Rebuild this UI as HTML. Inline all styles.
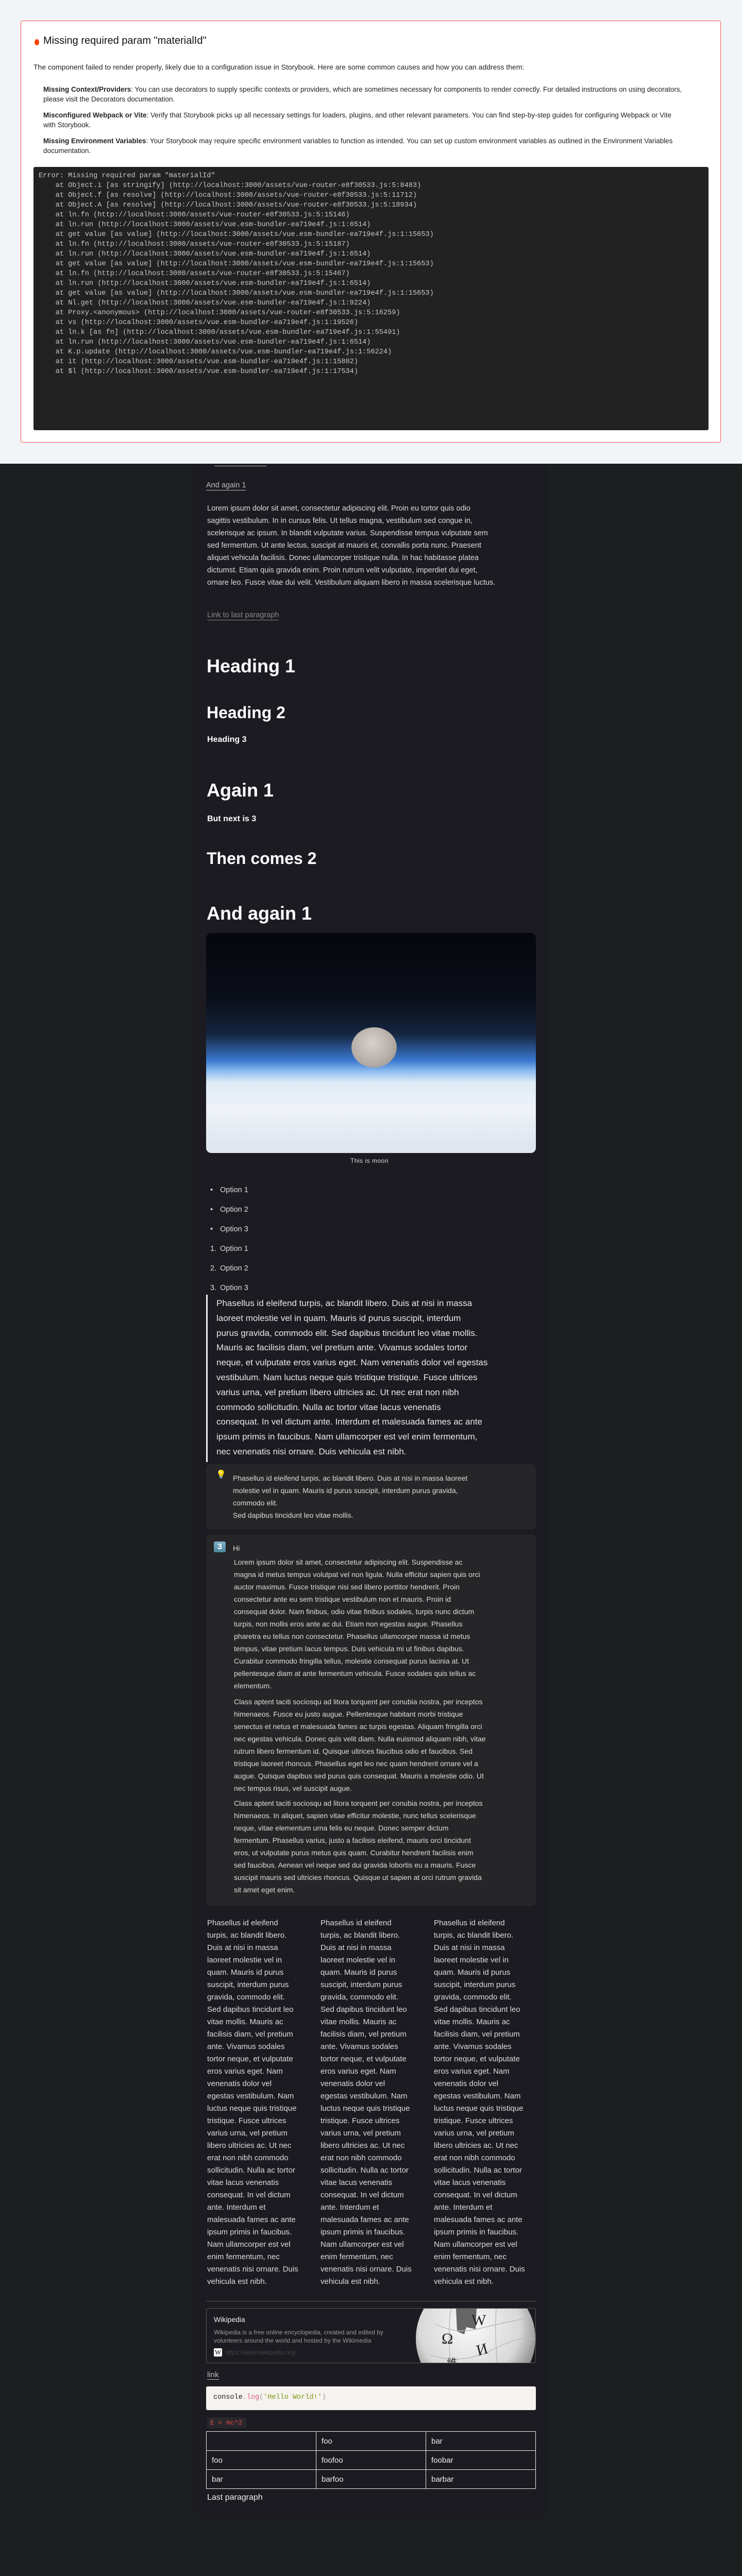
<!DOCTYPE html>
<html><head><meta charset="utf-8"><style>
*{margin:0;padding:0;box-sizing:border-box}
html,body{width:1440px;height:5016px;overflow:hidden}
body{background:#1b1f20;position:relative;font-family:"Liberation Sans",sans-serif}
.a{position:absolute;white-space:nowrap}
#top{position:absolute;left:0;top:0;width:1440px;height:900px;background:#f2f5f8}
#err{position:absolute;left:40px;top:40px;width:1359px;height:819px;background:#fff;border:1px solid #ff4d4d;border-radius:4px}
#err .t{font-size:20px;color:#111;}
#err p{font-size:13.5px;color:#222;line-height:19px}
pre.stack{position:absolute;left:65px;top:324px;width:1310px;height:511px;background:#222;border-radius:3px;color:#c8c8c8;font-family:"Liberation Mono",monospace;font-size:13.6px;line-height:19px;padding:8px 10px;overflow:hidden}
#card{position:absolute;left:376px;top:900px;width:688px;height:3988px;background:#1c1b21;border-radius:0 0 20px 20px}
.tx{color:#dcdcdc;font-size:14.5px;line-height:24px}
h1,h2,h3{color:#fff;font-weight:bold;position:absolute;white-space:nowrap}
h1{font-size:36px;line-height:40px}
h2{font-size:32px;line-height:40px}
h3{font-size:16px;line-height:20px}
.co{position:absolute;left:400px;width:640px;background:#262628;border-radius:8px}
.col{color:#dcdcdc;font-size:15px;line-height:24px;position:absolute;white-space:nowrap}
table{position:absolute;left:400px;top:4719px;width:640px;border-collapse:collapse}
td{border:1.5px solid #eee;height:37px;color:#eee;font-size:15px;padding:0 10px;width:33.3%}
</style></head><body>
<div id="top"></div>
<div id="err">
 <div class="a" style="left:26px;top:35px;width:9px;height:12px;border-radius:50%;background:#ff4400"></div>
 <div class="a t" style="left:43px;top:27px">Missing required param "materialId"</div>
 <p class="a" style="left:24px;top:80px;font-size:14px">The component failed to render properly, likely due to a configuration issue in Storybook. Here are some common causes and how you can address them:</p>
 <p class="a" style="left:43px;top:123px"><b>Missing Context/Providers</b>: You can use decorators to supply specific contexts or providers, which are sometimes necessary for components to render correctly. For detailed instructions on using decorators,<br>please visit the Decorators documentation.</p>
 <p class="a" style="left:43px;top:173px"><b>Misconfigured Webpack or Vite</b>: Verify that Storybook picks up all necessary settings for loaders, plugins, and other relevant parameters. You can find step-by-step guides for configuring Webpack or Vite<br>with Storybook.</p>
 <p class="a" style="left:43px;top:223px"><b>Missing Environment Variables</b>: Your Storybook may require specific environment variables to function as intended. You can set up custom environment variables as outlined in the Environment Variables<br>documentation.</p>
</div>
<pre class="stack">Error: Missing required param "materialId"
    at Object.i [as stringify] (http://localhost:3000/assets/vue-router-e8f30533.js:5:8483)
    at Object.f [as resolve] (http://localhost:3000/assets/vue-router-e8f30533.js:5:11712)
    at Object.A [as resolve] (http://localhost:3000/assets/vue-router-e8f30533.js:5:18934)
    at ln.fn (http://localhost:3000/assets/vue-router-e8f30533.js:5:15146)
    at ln.run (http://localhost:3000/assets/vue.esm-bundler-ea719e4f.js:1:6514)
    at get value [as value] (http://localhost:3000/assets/vue.esm-bundler-ea719e4f.js:1:15653)
    at ln.fn (http://localhost:3000/assets/vue-router-e8f30533.js:5:15187)
    at ln.run (http://localhost:3000/assets/vue.esm-bundler-ea719e4f.js:1:6514)
    at get value [as value] (http://localhost:3000/assets/vue.esm-bundler-ea719e4f.js:1:15653)
    at ln.fn (http://localhost:3000/assets/vue-router-e8f30533.js:5:15467)
    at ln.run (http://localhost:3000/assets/vue.esm-bundler-ea719e4f.js:1:6514)
    at get value [as value] (http://localhost:3000/assets/vue.esm-bundler-ea719e4f.js:1:15653)
    at Nl.get (http://localhost:3000/assets/vue.esm-bundler-ea719e4f.js:1:9224)
    at Proxy.&lt;anonymous&gt; (http://localhost:3000/assets/vue-router-e8f30533.js:5:16259)
    at vs (http://localhost:3000/assets/vue.esm-bundler-ea719e4f.js:1:19526)
    at ln.k [as fn] (http://localhost:3000/assets/vue.esm-bundler-ea719e4f.js:1:55491)
    at ln.run (http://localhost:3000/assets/vue.esm-bundler-ea719e4f.js:1:6514)
    at K.p.update (http://localhost:3000/assets/vue.esm-bundler-ea719e4f.js:1:56224)
    at it (http://localhost:3000/assets/vue.esm-bundler-ea719e4f.js:1:15882)
    at $l (http://localhost:3000/assets/vue.esm-bundler-ea719e4f.js:1:17534)</pre>

<div id="card"></div>
<div class="a" style="left:416px;top:904px;width:101px;height:1px;background:#bbb"></div>
<div class="a" style="left:400px;top:933px;font-size:14.5px;line-height:18px;color:#bbb;border-bottom:1px solid #bbb">And again 1</div>
<div class="a tx" style="left:402px;top:975px">Lorem ipsum dolor sit amet, consectetur adipiscing elit. Proin eu tortor quis odio<br>sagittis vestibulum. In in cursus felis. Ut tellus magna, vestibulum sed congue in,<br>scelerisque ac ipsum. In blandit vulputate varius. Suspendisse tempus vulputate sem<br>sed fermentum. Ut ante lectus, suscipit at mauris et, convallis porta nunc. Praesent<br>aliquet vehicula facilisis. Donec ullamcorper tristique nulla. In hac habitasse platea<br>dictumst. Etiam quis gravida enim. Proin rutrum velit vulputate, imperdiet dui eget,<br>ornare leo. Fusce vitae dui velit. Vestibulum aliquam libero in massa scelerisque luctus.</div>
<div class="a" style="left:402px;top:1185px;font-size:14.5px;line-height:18px;color:#888;border-bottom:1px solid #888">Link to last paragraph</div>
<h1 style="left:401px;top:1273px">Heading 1</h1>
<h2 style="left:401px;top:1363px">Heading 2</h2>
<h3 style="left:402px;top:1426px">Heading 3</h3>
<h1 style="left:401px;top:1514px">Again 1</h1>
<h3 style="left:402px;top:1580px">But next is 3</h3>
<h2 style="left:401px;top:1646px">Then comes 2</h2>
<h1 style="left:401px;top:1753px">And again 1</h1>
<div class="a" style="left:400px;top:1811px;width:640px;height:427px;border-radius:10px;overflow:hidden;background:linear-gradient(180deg,#06070c 0%,#0a0e18 30%,#152540 46%,#3a78d0 58%,#8fbff0 63%,#e0ebf7 68%,#eef2f8 80%,#dde4ee 100%)">
 <div style="position:absolute;left:282px;top:183px;width:88px;height:78px;border-radius:50%;background:radial-gradient(circle at 45% 40%,#d8d2cc,#b5aca6 60%,#8f8884)"></div>
</div>
<div class="a" style="left:680px;top:2245px;font-size:12px;line-height:16px;color:#ddd;letter-spacing:.5px">This is moon</div>
<div class="a tx" style="left:408px;top:2291px;line-height:38px">•<br>•<br>•</div>
<div class="a tx" style="left:408px;top:2405px;line-height:38px">1.<br>2.<br>3.</div>
<div class="a tx" style="left:427px;top:2291px;line-height:38px">Option 1<br>Option 2<br>Option 3<br>Option 1<br>Option 2<br>Option 3</div>
<div class="a" style="left:400px;top:2513px;width:3px;height:325px;background:#eee"></div>
<div class="a" style="left:420px;top:2516px;color:#e8e8e8;font-size:17px;line-height:28.8px">Phasellus id eleifend turpis, ac blandit libero. Duis at nisi in massa<br>laoreet molestie vel in quam. Mauris id purus suscipit, interdum<br>purus gravida, commodo elit. Sed dapibus tincidunt leo vitae mollis.<br>Mauris ac facilisis diam, vel pretium ante. Vivamus sodales tortor<br>neque, et vulputate eros varius eget. Nam venenatis dolor vel egestas<br>vestibulum. Nam luctus neque quis tristique tristique. Fusce ultrices<br>varius urna, vel pretium libero ultricies ac. Ut nec erat non nibh<br>commodo sollicitudin. Nulla ac tortor vitae lacus venenatis<br>consequat. In vel dictum ante. Interdum et malesuada fames ac ante<br>ipsum primis in faucibus. Nam ullamcorper est vel enim fermentum,<br>nec venenatis nisi ornare. Duis vehicula est nibh.</div>

<div class="co" style="top:2842px;height:127px"></div>
<div class="a" style="left:419px;top:2852px;font-size:16px">💡</div>
<div class="a tx" style="left:452px;top:2857px;font-size:14px">Phasellus id eleifend turpis, ac blandit libero. Duis at nisi in massa laoreet<br>molestie vel in quam. Mauris id purus suscipit, interdum purus gravida,<br>commodo elit.<br>Sed dapibus tincidunt leo vitae mollis.</div>

<div class="co" style="top:2979px;height:720px"></div>
<div class="a" style="left:415px;top:2992px;width:23px;height:21px;background:linear-gradient(#7fb0c8,#4f86a0);border-radius:3px;color:#fff;font-weight:bold;font-size:16px;line-height:21px;text-align:center">3</div>
<div class="a tx" style="left:452px;top:2993px;font-size:14px">Hi</div>
<div class="a tx" style="left:454px;top:3020px;font-size:14px">Lorem ipsum dolor sit amet, consectetur adipiscing elit. Suspendisse ac<br>magna id metus tempus volutpat vel non ligula. Nulla efficitur sapien quis orci<br>auctor maximus. Fusce tristique nisi sed libero porttitor hendrerit. Proin<br>consectetur ante eu sem tristique vestibulum non et mauris. Proin id<br>consequat dolor. Nam finibus, odio vitae finibus sodales, turpis nunc dictum<br>turpis, non mollis eros ante ac dui. Etiam non egestas augue. Phasellus<br>pharetra eu tellus non consectetur. Phasellus ullamcorper massa id metus<br>tempus, vitae pretium lacus tempus. Duis vehicula mi ut finibus dapibus.<br>Curabitur commodo fringilla tellus, molestie consequat purus lacinia at. Ut<br>pellentesque diam at ante fermentum vehicula. Fusce sodales quis tellus ac<br>elementum.</div>
<div class="a tx" style="left:454px;top:3291px;font-size:14px">Class aptent taciti sociosqu ad litora torquent per conubia nostra, per inceptos<br>himenaeos. Fusce eu justo augue. Pellentesque habitant morbi tristique<br>senectus et netus et malesuada fames ac turpis egestas. Aliquam fringilla orci<br>nec egestas vehicula. Donec quis velit diam. Nulla euismod aliquam nibh, vitae<br>rutrum libero fermentum id. Quisque ultrices faucibus odio et faucibus. Sed<br>tristique laoreet rhoncus. Phasellus eget leo nec quam hendrerit ornare vel a<br>augue. Quisque dapibus sed purus quis consequat. Mauris a molestie odio. Ut<br>nec tempus risus, vel suscipit augue.</div>
<div class="a tx" style="left:454px;top:3488px;font-size:14px">Class aptent taciti sociosqu ad litora torquent per conubia nostra, per inceptos<br>himenaeos. In aliquet, sapien vitae efficitur molestie, nunc tellus scelerisque<br>neque, vitae elementum urna felis eu neque. Donec semper dictum<br>fermentum. Phasellus varius, justo a facilisis eleifend, mauris orci tincidunt<br>eros, ut vulputate purus metus quis quam. Curabitur hendrerit facilisis enim<br>sed faucibus. Aenean vel neque sed dui gravida lobortis eu a mauris. Fusce<br>suscipit mauris sed ultricies rhoncus. Quisque ut sapien at orci rutrum gravida<br>sit amet eget enim.</div>

<div class="col" style="left:402px;top:3721px">Phasellus id eleifend<br>turpis, ac blandit libero.<br>Duis at nisi in massa<br>laoreet molestie vel in<br>quam. Mauris id purus<br>suscipit, interdum purus<br>gravida, commodo elit.<br>Sed dapibus tincidunt leo<br>vitae mollis. Mauris ac<br>facilisis diam, vel pretium<br>ante. Vivamus sodales<br>tortor neque, et vulputate<br>eros varius eget. Nam<br>venenatis dolor vel<br>egestas vestibulum. Nam<br>luctus neque quis tristique<br>tristique. Fusce ultrices<br>varius urna, vel pretium<br>libero ultricies ac. Ut nec<br>erat non nibh commodo<br>sollicitudin. Nulla ac tortor<br>vitae lacus venenatis<br>consequat. In vel dictum<br>ante. Interdum et<br>malesuada fames ac ante<br>ipsum primis in faucibus.<br>Nam ullamcorper est vel<br>enim fermentum, nec<br>venenatis nisi ornare. Duis<br>vehicula est nibh.</div>
<div class="col" style="left:622px;top:3721px">Phasellus id eleifend<br>turpis, ac blandit libero.<br>Duis at nisi in massa<br>laoreet molestie vel in<br>quam. Mauris id purus<br>suscipit, interdum purus<br>gravida, commodo elit.<br>Sed dapibus tincidunt leo<br>vitae mollis. Mauris ac<br>facilisis diam, vel pretium<br>ante. Vivamus sodales<br>tortor neque, et vulputate<br>eros varius eget. Nam<br>venenatis dolor vel<br>egestas vestibulum. Nam<br>luctus neque quis tristique<br>tristique. Fusce ultrices<br>varius urna, vel pretium<br>libero ultricies ac. Ut nec<br>erat non nibh commodo<br>sollicitudin. Nulla ac tortor<br>vitae lacus venenatis<br>consequat. In vel dictum<br>ante. Interdum et<br>malesuada fames ac ante<br>ipsum primis in faucibus.<br>Nam ullamcorper est vel<br>enim fermentum, nec<br>venenatis nisi ornare. Duis<br>vehicula est nibh.</div>
<div class="col" style="left:842px;top:3721px">Phasellus id eleifend<br>turpis, ac blandit libero.<br>Duis at nisi in massa<br>laoreet molestie vel in<br>quam. Mauris id purus<br>suscipit, interdum purus<br>gravida, commodo elit.<br>Sed dapibus tincidunt leo<br>vitae mollis. Mauris ac<br>facilisis diam, vel pretium<br>ante. Vivamus sodales<br>tortor neque, et vulputate<br>eros varius eget. Nam<br>venenatis dolor vel<br>egestas vestibulum. Nam<br>luctus neque quis tristique<br>tristique. Fusce ultrices<br>varius urna, vel pretium<br>libero ultricies ac. Ut nec<br>erat non nibh commodo<br>sollicitudin. Nulla ac tortor<br>vitae lacus venenatis<br>consequat. In vel dictum<br>ante. Interdum et<br>malesuada fames ac ante<br>ipsum primis in faucibus.<br>Nam ullamcorper est vel<br>enim fermentum, nec<br>venenatis nisi ornare. Duis<br>vehicula est nibh.</div>

<div class="a" style="left:400px;top:4466px;width:640px;height:1px;background:#555"></div>
<div class="a" style="left:400px;top:4480px;width:640px;height:107px;border:1px solid #5a5550;border-radius:4px;overflow:hidden">
 <svg style="position:absolute;left:404px;top:-60px" width="236" height="240" viewBox="0 0 236 240">
  <defs><radialGradient id="g" cx="45%" cy="40%" r="60%"><stop offset="0" stop-color="#fafafa"/><stop offset=".7" stop-color="#d8d8d8"/><stop offset="1" stop-color="#8a8a8a"/></radialGradient></defs>
  <circle cx="118" cy="118" r="116" fill="url(#g)"/>
  <path d="M80 60 L120 58 L118 100 L100 96 L96 110 L82 104 Z" fill="#666"/>
  <g fill="none" stroke="#bbb" stroke-width="1.5"><path d="M40 90 Q80 110 120 100 T210 80"/><path d="M30 150 Q90 170 150 140 T230 120"/><path d="M70 60 Q60 130 80 240"/><path d="M160 40 Q150 120 170 240"/></g>
  <text x="110" y="92" font-family="Liberation Serif,serif" font-size="30" fill="#222">W</text>
  <text x="52" y="128" font-family="Liberation Serif,serif" font-size="30" fill="#222">Ω</text>
  <text x="120" y="148" font-family="Liberation Serif,serif" font-size="30" fill="#222" transform="rotate(-15 135 140)">И</text>
  <text x="62" y="172" font-family="Noto Sans CJK SC,sans-serif" font-size="20" fill="#333">維</text>
 </svg>
 <div class="a" style="left:14px;top:13px;color:#eee;font-size:14px">Wikipedia</div>
 <div class="a" style="left:14px;top:38px;color:#999;font-size:12px;line-height:16px">Wikipedia is a free online encyclopedia, created and edited by<br>volunteers around the world and hosted by the Wikimedia</div>
 <div class="a" style="left:14px;top:77px;width:16px;height:16px;background:#fff;border-radius:2px;color:#000;font-family:'Liberation Serif',serif;font-size:13px;line-height:16px;text-align:center">W</div>
 <div class="a" style="left:36px;top:78px;color:#444;font-size:12px">https://www.wikipedia.org/</div>
</div>
<div class="a" style="left:402px;top:4601px;color:#bbb;font-size:15px;line-height:17px;border-bottom:1px solid #bbb">link</div>
<div class="a" style="left:400px;top:4632px;width:640px;height:46px;background:#f5f2ef;border-radius:3px"></div>
<div class="a" style="left:414px;top:4646px;font-family:'Liberation Mono',monospace;font-size:13.5px;color:#222">console<span style="color:#999">.</span><span style="color:#e06080">log</span><span style="color:#999">(</span><span style="color:#7a9a10">'Hello World!'</span><span style="color:#999">)</span></div>
<div class="a" style="left:402px;top:4692px;width:76px;height:21px;background:#28272c;border-radius:3px;color:#e04848;font-family:'Liberation Mono',monospace;font-size:13px;line-height:21px;padding-left:6px">E = mc^2</div>
<table><tr><td></td><td>foo</td><td>bar</td></tr><tr><td>foo</td><td>foofoo</td><td>foobar</td></tr><tr><td>bar</td><td>barfoo</td><td>barbar</td></tr></table>
<div class="a" style="left:402px;top:4839px;color:#eee;font-size:16px">Last paragraph</div>
</body></html>
